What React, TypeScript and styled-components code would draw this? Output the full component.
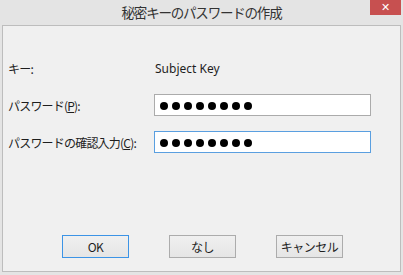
import styled, { createGlobalStyle } from "styled-components";

const GlobalStyle = createGlobalStyle`
  html, body {
    margin: 0;
    padding: 0;
    background: #e4e4e4;
  }
  body {
    font-family: "Noto Sans CJK JP", "Noto Sans", sans-serif;
    color: #1e1e1e;
  }
`;

const Window = styled.div`
  width: 403px;
  height: 275px;
  box-sizing: border-box;
  background: #e4e4e4;
  display: flex;
  flex-direction: column;
  padding: 0 2px 3px 2px;
`;

const TitleBar = styled.div`
  height: 25px;
  flex-shrink: 0;
  display: grid;
  grid-template-columns: 1fr auto 1fr;
  align-items: start;
`;

const Title = styled.div`
  grid-column: 2;
  font-size: 13.5px;
  line-height: 25px;
  color: #333;
  letter-spacing: -1.2px;
`;

const CloseButton = styled.div`
  grid-column: 3;
  justify-self: end;
  width: 31px;
  height: 15px;
  background: #c75050;
  color: #fff;
  font-family: "DejaVu Sans", sans-serif;
  font-size: 11px;
  font-weight: bold;
  line-height: 15px;
  text-align: center;
`;

const Client = styled.div`
  flex: 1;
  background: #f0f0f0;
  border: 1px solid #bdbdbd;
  display: flex;
  flex-direction: column;
  padding: 31px 0 13px 5px;
`;

const Form = styled.div`
  display: grid;
  grid-template-columns: 146px 217px;
  grid-auto-rows: 22px;
  row-gap: 15px;
  align-items: center;
`;

const Label = styled.div`
  font-size: 12px;
  color: #1e1e1e;
  white-space: nowrap;
  letter-spacing: -0.8px;
`;

const Value = styled.div`
  font-family: "Noto Sans", sans-serif;
  font-size: 12px;
  color: #1e1e1e;
  padding-left: 1px;
`;

const Field = styled.div<{ $focused?: boolean }>`
  height: 22px;
  box-sizing: border-box;
  background: #fff;
  border: 1px solid ${(p) => (p.$focused ? "#5a9fe0" : "#ababab")};
  display: flex;
  align-items: center;
  gap: 4px;
  padding: 1px 0 0 5px;
`;

const Dot = styled.span`
  width: 8px;
  height: 8px;
  border-radius: 50%;
  background: #000;
`;

const Buttons = styled.div`
  margin-top: auto;
  display: flex;
  gap: 40px;
  padding-left: 54px;
`;

const Button = styled.div<{ $default?: boolean }>`
  width: 67px;
  height: 23px;
  box-sizing: border-box;
  border: 1px solid ${(p) => (p.$default ? "#3c94e6" : "#acacac")};
  background: linear-gradient(#f0f0f0, #e5e5e5);
  display: flex;
  align-items: center;
  justify-content: center;
  font-size: 12px;
  letter-spacing: -0.5px;
  color: #1e1e1e;
`;

const PasswordField = ({ length, focused }: { length: number; focused?: boolean }) => (
  <Field $focused={focused}>
    {Array.from({ length }).map((_, i) => (
      <Dot key={i} />
    ))}
  </Field>
);

const App = () => {
  return (
    <>
      <GlobalStyle />
      <Window>
        <TitleBar>
          <Title>秘密キーのパスワードの作成</Title>
          <CloseButton>✕</CloseButton>
        </TitleBar>
        <Client>
          <Form>
            <Label>キー:</Label>
            <Value>Subject Key</Value>
            <Label>
              パスワード(<u>P</u>):
            </Label>
            <PasswordField length={8} />
            <Label>
              パスワードの確認入力(<u>C</u>):
            </Label>
            <PasswordField length={8} focused />
          </Form>
          <Buttons>
            <Button $default>OK</Button>
            <Button>なし</Button>
            <Button>キャンセル</Button>
          </Buttons>
        </Client>
      </Window>
    </>
  );
};

export default App;
